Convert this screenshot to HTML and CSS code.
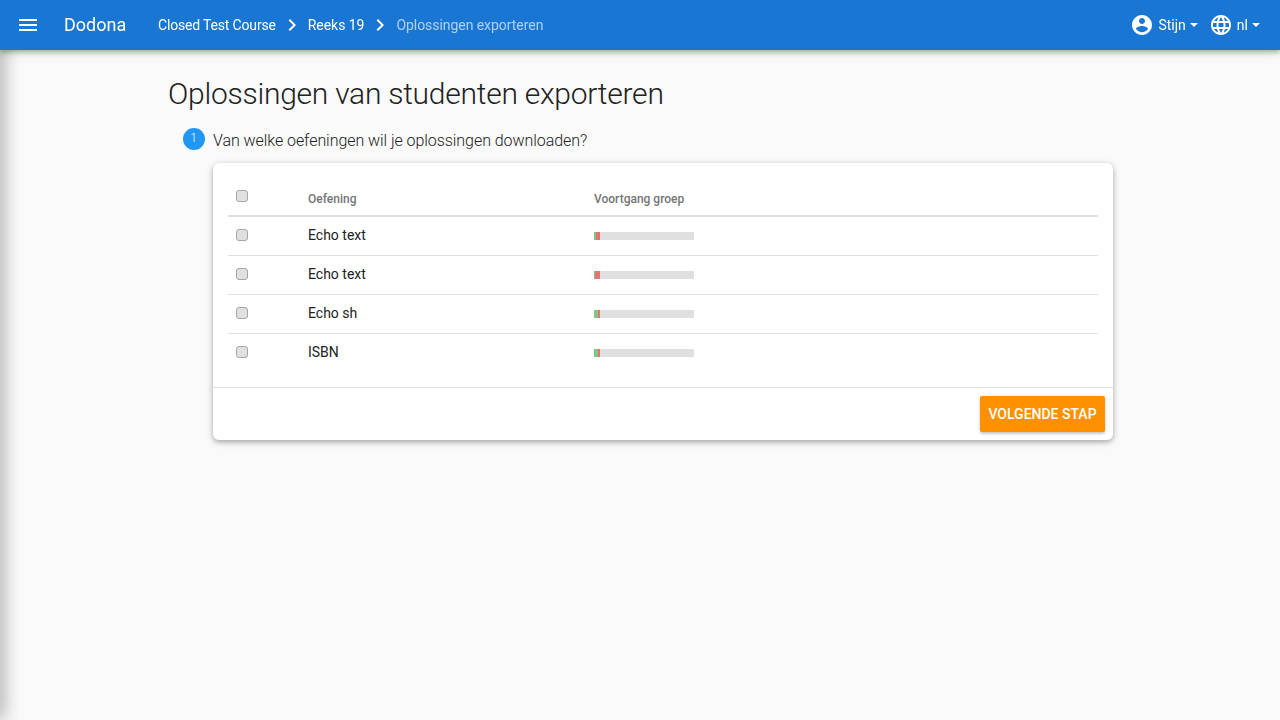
FILE: index.html
```html
<!DOCTYPE html>
<html lang="nl">
<head>
<meta charset="utf-8">
<title>Oplossingen exporteren</title>
<link rel="stylesheet" href="styles.css">
</head>
<body>
<div class="drawer-shadow"></div>
<header class="navbar">
  <button class="menu-btn" aria-label="Menu">
    <svg class="icon" viewBox="0 0 24 24"><path d="M3 18h18v-2H3v2zm0-5h18v-2H3v2zm0-7v2h18V6H3z"/></svg>
  </button>
  <span class="brand">Dodona</span>
  <nav class="crumbs">
    <a class="crumb first">Closed Test Course</a>
    <svg class="chev" viewBox="0 0 24 24"><path d="M10 6L8.59 7.41 13.17 12l-4.58 4.59L10 18l6-6z"/></svg>
    <a class="crumb">Reeks 19</a>
    <svg class="chev" viewBox="0 0 24 24"><path d="M10 6L8.59 7.41 13.17 12l-4.58 4.59L10 18l6-6z"/></svg>
    <span class="crumb current">Oplossingen exporteren</span>
  </nav>
  <div class="nav-right">
    <div class="nav-item">
      <svg class="icon" viewBox="0 0 24 24"><path d="M12 2C6.48 2 2 6.48 2 12s4.48 10 10 10 10-4.48 10-10S17.52 2 12 2zm0 3c1.66 0 3 1.34 3 3s-1.34 3-3 3-3-1.34-3-3 1.34-3 3-3zm0 14.2c-2.5 0-4.71-1.28-6-3.22.03-1.99 4-3.08 6-3.08 1.99 0 5.97 1.09 6 3.08-1.29 1.94-3.5 3.22-6 3.22z"/></svg>
      <span>Stijn</span><i class="caret"></i>
    </div>
    <div class="nav-item">
      <svg class="icon" viewBox="0 0 24 24"><path d="M11.99 2C6.47 2 2 6.48 2 12s4.47 10 9.99 10C17.52 22 22 17.52 22 12S17.52 2 11.99 2zm6.93 6h-2.95c-.32-1.25-.78-2.45-1.38-3.56 1.84.63 3.37 1.91 4.33 3.56zM12 4.04c.83 1.2 1.48 2.53 1.91 3.96h-3.82c.43-1.43 1.08-2.76 1.91-3.96zM4.26 14C4.1 13.36 4 12.69 4 12s.1-1.36.26-2h3.38c-.08.66-.14 1.32-.14 2 0 .68.06 1.34.14 2H4.26zm.82 2h2.95c.32 1.25.78 2.45 1.38 3.56-1.84-.63-3.37-1.9-4.33-3.56zm2.95-8H5.08c.96-1.66 2.49-2.93 4.33-3.56C8.81 5.55 8.35 6.75 8.03 8zM12 19.96c-.83-1.2-1.48-2.53-1.91-3.96h3.82c-.43 1.43-1.08 2.76-1.91 3.96zM14.34 14H9.66c-.09-.66-.16-1.32-.16-2 0-.68.07-1.35.16-2h4.68c.09.65.16 1.32.16 2 0 .68-.07 1.34-.16 2zm.25 5.56c.6-1.11 1.06-2.31 1.38-3.56h2.95c-.96 1.65-2.49 2.93-4.33 3.56zM16.36 14c.08-.66.14-1.32.14-2 0-.68-.06-1.34-.14-2h3.38c.16.64.26 1.31.26 2s-.1 1.36-.26 2h-3.38z"/></svg>
      <span>nl</span><i class="caret"></i>
    </div>
  </div>
</header>
<main class="content">
  <h1 class="title">Oplossingen van studenten exporteren</h1>
  <div class="step-head">
    <span class="step-num">1</span>
    <span class="step-label">Van welke oefeningen wil je oplossingen downloaden?</span>
  </div>
  <section class="card">
    <div class="card-body">
      <table class="table">
        <thead>
          <tr>
            <th class="col-check"><input type="checkbox" class="check"></th>
            <th class="col-name">Oefening</th>
            <th>Voortgang groep</th>
          </tr>
        </thead>
        <tbody>
          <tr>
            <td class="col-check"><input type="checkbox" class="check"></td>
            <td class="col-name">Echo text</td>
            <td><div class="progress"><i class="good" style="width:2px"></i><i class="bad" style="width:4px"></i></div></td>
          </tr>
          <tr>
            <td class="col-check"><input type="checkbox" class="check"></td>
            <td class="col-name">Echo text</td>
            <td><div class="progress"><i class="good" style="width:1px"></i><i class="bad" style="width:5px"></i></div></td>
          </tr>
          <tr>
            <td class="col-check"><input type="checkbox" class="check"></td>
            <td class="col-name">Echo sh</td>
            <td><div class="progress"><i class="good" style="width:4px"></i><i class="bad" style="width:2px"></i></div></td>
          </tr>
          <tr>
            <td class="col-check"><input type="checkbox" class="check"></td>
            <td class="col-name">ISBN</td>
            <td><div class="progress"><i class="good" style="width:4px"></i><i class="bad" style="width:2px"></i></div></td>
          </tr>
        </tbody>
      </table>
    </div>
    <div class="card-actions">
      <button class="btn-primary">Volgende stap</button>
    </div>
  </section>
</main>
</body>
</html>
```
FILE: styles.css
```css
* { box-sizing: border-box; }
html, body { height: 100%; }
body {
  margin: 0;
  background: #fafafa;
  color: #212121;
  font-family: Roboto, "Liberation Sans", sans-serif;
  font-size: 14px;
  line-height: 20px;
  overflow: hidden;
}
.drawer-shadow {
  position: fixed;
  left: -10px;
  top: 0;
  width: 10px;
  height: 100%;
  box-shadow: 0 0 20px rgba(0,0,0,.55);
}
.navbar {
  position: relative;
  height: 50px;
  background: #1976d2;
  color: #fff;
  display: flex;
  align-items: center;
  padding: 0 20px 0 16px;
  box-shadow: 0 2px 5px rgba(0,0,0,.26), 0 2px 10px rgba(0,0,0,.16);
}
.icon { width: 24px; height: 24px; fill: #fff; display: block; flex: none; }
.menu-btn { background: none; border: 0; padding: 0; margin: 0 24px 0 0; }
.brand { font-size: 18px; width: 94px; }
.crumbs { display: flex; align-items: center; }
.crumb { color: #fff; letter-spacing: -.05px; }
.crumb.first { letter-spacing: -.17px; }
.crumb.current { color: rgba(255,255,255,.65); }
.chev { width: 24px; height: 24px; fill: #fff; margin: 0 4px; }
.nav-right { margin-left: auto; display: flex; align-items: center; gap: 11px; }
.nav-item { display: flex; align-items: center; }
.nav-item span { margin-left: 4px; }
.caret {
  margin-left: 4px;
  border-left: 4px solid transparent;
  border-right: 4px solid transparent;
  border-top: 4px solid #fff;
}
.content { padding: 0 0 0 168px; }
.title {
  margin: 0;
  padding-top: 24px;
  font-size: 30px;
  line-height: 40px;
  font-weight: 300;
  letter-spacing: -.25px;
}
.step-head { display: flex; align-items: center; margin: 14px 0 0 15px; height: 22px; }
.step-num {
  width: 22px;
  height: 22px;
  padding-right: 1px;
  border-radius: 50%;
  background: #2196f3;
  color: #fff;
  font-size: 12px;
  font-weight: 300;
  line-height: 21px;
  text-align: center;
}
.step-label {
  margin-left: 8px;
  font-size: 16px;
  font-weight: 300;
  letter-spacing: -.06px;
  padding-top: 4px;
}
.card {
  width: 900px;
  margin: 13px 0 0 45px;
  background: #fff;
  border-radius: 6px;
  box-shadow: 0 2px 5px rgba(0,0,0,.26), 0 2px 10px rgba(0,0,0,.12);
}
.card-body { padding: 15px 15px 15px; }
.table { width: 870px; border-collapse: collapse; table-layout: fixed; }
.table th {
  height: 38px;
  text-align: left;
  font-size: 12px;
  font-weight: 500;
  color: #757575;
  padding: 5px 0 0;
  border-bottom: 2px solid #e0e0e0;
}
.table td {
  height: 39px;
  padding: 0 0 2px;
  border-bottom: 1px solid #e0e0e0;
}
.table tr:last-child td { border-bottom: 0; }
.col-check { width: 80px; padding-left: 8px !important; }
.col-name { width: 286px; }
.table th.col-check { vertical-align: top; padding-top: 12px !important; }
.check {
  appearance: none;
  display: block;
  margin: 0;
  width: 12px;
  height: 12px;
  background: #e0e0e0;
  border: 1px solid #a6a6a6;
  border-radius: 3px;
}
.progress { display: flex; width: 100px; height: 8px; margin-top: 2px; background: #e0e0e0; }
.progress i { display: block; height: 100%; }
.good { background: #81c784; }
.bad { background: #e57373; }
.card-actions {
  border-top: 1px solid #e0e0e0;
  padding: 8px;
  display: flex;
  justify-content: flex-end;
}
.btn-primary {
  height: 36px;
  width: 125px;
  padding: 0;
  border: 0;
  border-radius: 2px;
  background: #ff9100;
  color: #fff;
  font-family: inherit;
  font-size: 14px;
  font-weight: 500;
  text-transform: uppercase;
  box-shadow: 0 2px 2px rgba(0,0,0,.14), 0 1px 5px rgba(0,0,0,.12);
}
```
